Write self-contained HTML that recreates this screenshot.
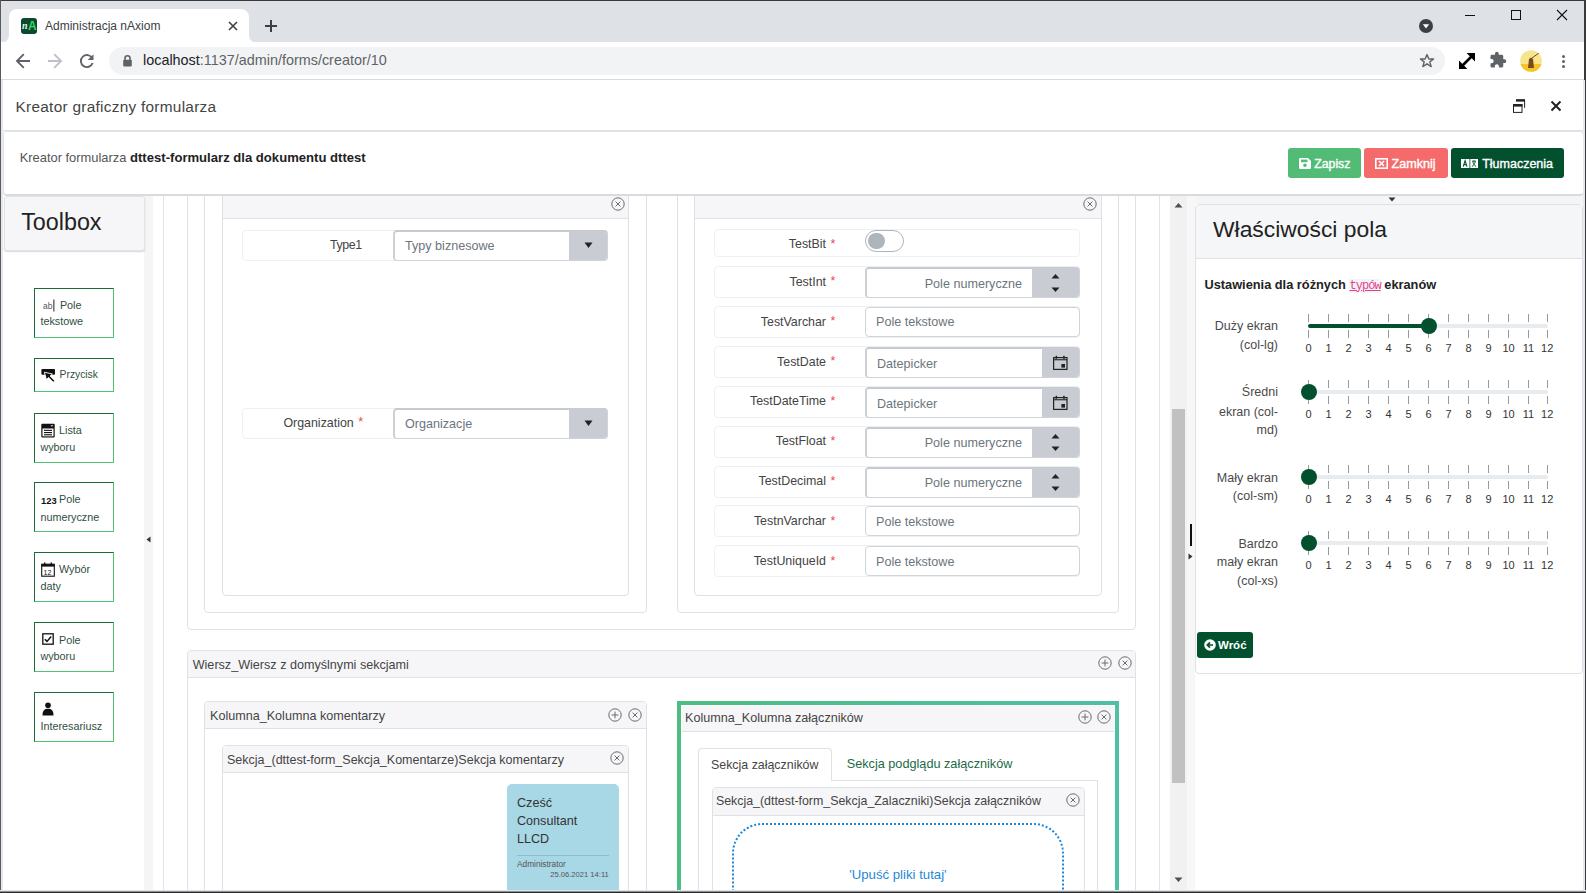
<!DOCTYPE html>
<html><head><meta charset="utf-8"><style>
html,body{margin:0;padding:0;width:1586px;height:893px;overflow:hidden;background:#fff;position:relative;font-family:"Liberation Sans",sans-serif}
.a{position:absolute}
.t{white-space:nowrap}
</style></head><body>
<div class="a" style="left:0.00px;top:0.00px;width:1586.00px;height:42.00px;background:#dee1e6"></div><div class="a" style="left:9.00px;top:9.00px;width:240.00px;height:34.00px;background:#fff;border-radius:8px 8px 0 0"></div><div class="a" style="left:1.00px;top:33.00px;width:8.00px;height:10.00px;background:#fff"></div><div class="a" style="left:1.00px;top:25.00px;width:8.00px;height:18.00px;background:#dee1e6;border-bottom-right-radius:8px"></div><div class="a" style="left:249.00px;top:33.00px;width:8.00px;height:10.00px;background:#fff"></div><div class="a" style="left:249.00px;top:25.00px;width:8.00px;height:18.00px;background:#dee1e6;border-bottom-left-radius:8px"></div><div class="a" style="left:21px;top:18px;width:16px;height:16px;background:#0b4a2c;border-radius:3px;overflow:hidden"><div class="a t" style="left:1px;top:1px;font:italic bold 10px/14px 'Liberation Serif';color:#e8f0ea">n</div><div class="a t" style="left:7px;top:1px;font:bold 12px/14px 'Liberation Sans';color:#3ad26a">A</div></div><div class="a t" style="top:19.84px;font-size:12.0px;line-height:12.0px;color:#3c4043;font-weight:normal;font-family:'Liberation Sans';left:45.00px;">Administracja nAxiom</div><svg class="a" style="left:226.00px;top:19.00px" width="14" height="14" viewBox="0 0 14 14"><path d="M3 3L11 11M11 3L3 11" stroke="#3c4043" stroke-width="1.6"/></svg><svg class="a" style="left:263.00px;top:18.00px" width="16" height="16" viewBox="0 0 16 16"><path d="M8 2V14M2 8H14" stroke="#3c4043" stroke-width="2"/></svg><svg class="a" style="left:1419.00px;top:19.00px" width="14" height="14" viewBox="0 0 14 14"><circle cx="7" cy="7" r="7" fill="#3c4043"/><path d="M3.8 5.2H10.2L7 9.4Z" fill="#fff"/></svg><div class="a" style="left:1465.00px;top:15.00px;width:10.00px;height:1.00px;background:#111"></div><div class="a" style="left:1511.00px;top:10.00px;width:10.00px;height:10.00px;border:1px solid #111;box-sizing:border-box"></div><svg class="a" style="left:1556.00px;top:9.00px" width="12" height="12" viewBox="0 0 12 12"><path d="M1 1L11 11M11 1L1 11" stroke="#111" stroke-width="1.1"/></svg><div class="a" style="left:0.00px;top:42.00px;width:1586.00px;height:37.00px;background:#fff"></div><div class="a" style="left:0.00px;top:79.00px;width:1586.00px;height:1.00px;background:#d9dbde"></div><svg class="a" style="left:14.00px;top:53.00px" width="18" height="16" viewBox="0 0 18 16"><path d="M16 8H3M9.8 1.2L3 8L9.8 14.8" stroke="#5f6368" stroke-width="1.9" fill="none"/></svg><svg class="a" style="left:46.00px;top:53.00px" width="18" height="16" viewBox="0 0 18 16"><path d="M2 8H15M8.2 1.2L15 8L8.2 14.8" stroke="#bdc1c6" stroke-width="1.9" fill="none"/></svg><svg class="a" style="left:78.00px;top:52.00px" width="18" height="18" viewBox="0 0 18 18"><path d="M14.2 6.2A6 6 0 1 0 14.6 11" stroke="#5f6368" stroke-width="1.9" fill="none"/><path d="M15.5 2.2V8H9.7Z" fill="#5f6368"/></svg><div class="a" style="left:109.00px;top:47.00px;width:1336.00px;height:28.00px;background:#f1f3f4;border-radius:14px"></div><svg class="a" style="left:122.00px;top:54.00px" width="11" height="13" viewBox="0 0 11 13"><path d="M3 6V4.2A2.5 2.5 0 0 1 8 4.2V6" stroke="#5f6368" stroke-width="1.6" fill="none"/><rect x="1.2" y="5.8" width="8.6" height="6.6" rx="1" fill="#5f6368"/></svg><div class="a t" style="top:53.41px;font-size:14.4px;line-height:14.4px;color:#202124;font-weight:normal;font-family:'Liberation Sans';left:143.00px;"><span style="color:#202124">localhost</span><span style="color:#5f6368">:1137/admin/forms/creator/10</span></div><svg class="a" style="left:1419.00px;top:53.00px" width="16" height="16" viewBox="0 0 16 16"><path d="M8 1.6L9.9 6H14.6L10.8 8.9L12.2 13.6L8 10.8L3.8 13.6L5.2 8.9L1.4 6H6.1Z" stroke="#5f6368" stroke-width="1.4" fill="none" stroke-linejoin="round"/></svg><svg class="a" style="left:1458.00px;top:52.00px" width="18" height="18" viewBox="0 0 18 18"><path d="M4.5 13.5L13.5 4.5" stroke="#000" stroke-width="2.6"/><path d="M8.6 1H17V9.4Z" fill="#000"/><path d="M1 8.6V17H9.4Z" fill="#000"/></svg><svg class="a" style="left:1489px;top:51px" width="18" height="18" viewBox="0 0 24 24"><path d="M20.5 11H19V7c0-1.1-.9-2-2-2h-4V3.5C13 2.12 11.88 1 10.5 1S8 2.12 8 3.5V5H4c-1.1 0-1.99.9-1.99 2v3.8H3.5c1.49 0 2.7 1.21 2.7 2.7s-1.21 2.7-2.7 2.7H2V20c0 1.1.9 2 2 2h3.8v-1.5c0-1.490 1.21-2.7 2.7-2.7 1.49 0 2.7 1.21 2.7 2.7V22H17c1.1 0 2-.9 2-2v-4h1.5c1.38 0 2.5-1.12 2.5-2.5S21.88 11 20.5 11z" fill="#5f6368"/></svg><svg class="a" style="left:1520.00px;top:50.00px" width="22" height="22" viewBox="0 0 22 22"><defs><clipPath id="cav"><circle cx="11" cy="11" r="10.8"/></clipPath></defs><g clip-path="url(#cav)"><rect width="22" height="22" fill="#f6e58d"/><rect y="14" width="22" height="8" fill="#f4c52b"/><path d="M8 18L9 9L11 7.5L13 9L14 18Z" fill="#7a4a1e"/><path d="M12 8L19 3" stroke="#7a4a1e" stroke-width="1"/></g></svg><div class="a" style="left:1561.90px;top:54.90px;width:3.00px;height:3.00px;border-radius:50%;background:#5f6368"></div><div class="a" style="left:1561.90px;top:60.10px;width:3.00px;height:3.00px;border-radius:50%;background:#5f6368"></div><div class="a" style="left:1561.90px;top:64.90px;width:3.00px;height:3.00px;border-radius:50%;background:#5f6368"></div><div class="a" style="left:0.00px;top:80.00px;width:1586.00px;height:50.00px;background:#fff"></div><div class="a t" style="top:98.86px;font-size:15.4px;line-height:15.4px;color:#444;font-weight:normal;font-family:'Liberation Sans';letter-spacing:0.27px;left:15.50px;">Kreator graficzny formularza</div><svg class="a" style="left:1511.00px;top:97.00px" width="16" height="18" viewBox="0 0 16 18"><path d="M5.6 3.2H13.6V10.8" stroke="#222" stroke-width="1" fill="none"/><rect x="5" y="2.2" width="9" height="2.4" fill="#222"/><rect x="2.5" y="7.6" width="8.5" height="7.8" stroke="#222" stroke-width="1" fill="none"/><rect x="2" y="7.2" width="9.5" height="2.4" fill="#222"/></svg><svg class="a" style="left:1549.00px;top:99.00px" width="14" height="14" viewBox="0 0 14 14"><path d="M2.5 2.5L11.5 11.5M11.5 2.5L2.5 11.5" stroke="#222" stroke-width="2"/></svg><div class="a" style="left:0.00px;top:130.00px;width:1586.00px;height:1.00px;background:#dee2e6"></div><div class="a" style="left:3.00px;top:131.00px;width:1581.00px;height:65.00px;background:#fff;border:1px solid #dee2e6;border-bottom:2px solid #d9dcdf;border-radius:4px;box-sizing:border-box"></div><div class="a t" style="top:151.03px;font-size:13.2px;line-height:13.2px;color:#555;font-weight:normal;font-family:'Liberation Sans';left:19.70px;"><span style="font-size:12.9px">Kreator formularza </span><b style="color:#222;font-size:13.1px">dttest-formularz dla dokumentu dttest</b></div><div class="a" style="left:1288.00px;top:148.00px;width:73.00px;height:30.00px;background:#52bc76;border-radius:3px"></div><div class="a" style="left:1364.00px;top:148.00px;width:84.00px;height:30.00px;background:#f56b6b;border-radius:3px"></div><div class="a" style="left:1451.00px;top:148.00px;width:113.00px;height:30.00px;background:#03502f;border-radius:3px"></div><svg class="a" style="left:1299.00px;top:158.00px" width="12" height="11" viewBox="0 0 12 11"><path d="M0 1.2A1.2 1.2 0 0 1 1.2 0H9L12 3V9.8A1.2 1.2 0 0 1 10.8 11H1.2A1.2 1.2 0 0 1 0 9.8Z" fill="#fff"/><rect x="2" y="1.6" width="6.5" height="2.6" fill="#52bc76"/><circle cx="6" cy="7.3" r="1.7" fill="#52bc76"/></svg><svg class="a" style="left:1375.00px;top:158.00px" width="13" height="11" viewBox="0 0 13 11"><rect x="0.8" y="0.8" width="11.4" height="9.4" stroke="#fff" stroke-width="1.6" fill="none"/><path d="M4 3L9 8M9 3L4 8" stroke="#fff" stroke-width="1.7"/></svg><svg class="a" style="left:1461.00px;top:159.00px" width="17" height="9" viewBox="0 0 17 9"><rect x="0" y="0" width="17" height="9" fill="#fff"/><path d="M2.2 7.6L4.1 1.6L6 7.6M3 5.6H5.2" stroke="#03502f" stroke-width="1.1" fill="none"/><rect x="8.5" y="0" width="0.8" height="9" fill="#03502f"/><path d="M11 2.2H15M13 1.2V2.2M11.8 2.4C12.3 5 13.5 6.6 15.2 7.6M14.3 2.4C13.8 5 12.6 6.6 10.9 7.6" stroke="#03502f" stroke-width="0.9" fill="none"/></svg><div class="a t" style="top:157.99px;font-size:12.3px;line-height:12.3px;color:#fff;font-weight:normal;font-family:'Liberation Sans';left:1314.20px;-webkit-text-stroke:0.35px #fff">Zapisz</div><div class="a t" style="top:157.73px;font-size:12.6px;line-height:12.6px;color:#fff;font-weight:normal;font-family:'Liberation Sans';left:1391.50px;-webkit-text-stroke:0.35px #fff">Zamknij</div><div class="a t" style="top:157.82px;font-size:12.5px;line-height:12.5px;color:#fff;font-weight:normal;font-family:'Liberation Sans';left:1482.20px;-webkit-text-stroke:0.35px #fff">Tłumaczenia</div><div class="a" style="left:3.00px;top:196.00px;width:1581.00px;height:694.00px;background:#fff"></div><div class="a" style="left:144.00px;top:196.00px;width:9.00px;height:694.00px;background:#f5f5f5"></div><div class="a" style="left:1170.00px;top:196.00px;width:17.00px;height:694.00px;background:#f1f1f1"></div><div class="a" style="left:1172.00px;top:409.00px;width:13.00px;height:374.00px;background:#c1c1c1"></div><svg class="a" style="left:1174.00px;top:202.00px" width="9" height="6" viewBox="0 0 9 6"><path d="M0.5 5.5H8.5L4.5 1Z" fill="#505050"/></svg><svg class="a" style="left:1174.00px;top:877.00px" width="9" height="6" viewBox="0 0 9 6"><path d="M0.5 0.5H8.5L4.5 5Z" fill="#505050"/></svg><div class="a" style="left:1187.00px;top:196.00px;width:8.00px;height:694.00px;background:#f7f7f7"></div><div class="a" style="left:1195.00px;top:196.00px;width:389.00px;height:8.00px;background:#f5f5f5"></div><svg class="a" style="left:1388.00px;top:197.00px" width="8" height="5" viewBox="0 0 8 5"><path d="M0.5 0.5H7.5L4 4.5Z" fill="#333"/></svg><svg class="a" style="left:146.00px;top:536.00px" width="5" height="7" viewBox="0 0 5 7"><path d="M4.5 0.5V6.5L0.5 3.5Z" fill="#333"/></svg><svg class="a" style="left:1188.00px;top:553.00px" width="5" height="7" viewBox="0 0 5 7"><path d="M0.5 0.5V6.5L4.5 3.5Z" fill="#333"/></svg><div class="a" style="left:1190.00px;top:524.00px;width:2.00px;height:22.00px;background:#111"></div><div class="a" style="left:4.00px;top:196.00px;width:141.00px;height:55.00px;background:#f6f6f8;border:1px solid #e2e4e7;border-radius:3px;box-shadow:0 1px 1.5px rgba(0,0,0,.16);box-sizing:border-box"></div><div class="a t" style="top:210.78px;font-size:23.3px;line-height:23.3px;color:#222;font-weight:normal;font-family:'Liberation Sans';left:21.20px;">Toolbox</div><div class="a" style="left:34.00px;top:288.00px;width:80.00px;height:50.00px;border-style:solid;border-width:1px;border-color:#1d6b3c #4ec472 #4ec472 #1d6b3c;box-sizing:border-box"></div><svg class="a" style="left:43.00px;top:298.00px" width="13" height="14" viewBox="0 0 13 14"><text x="0" y="10.5" font-family="Liberation Sans" font-size="8.5" fill="#555">ab</text><rect x="10.2" y="1.5" width="1.3" height="12" fill="#555"/></svg><div class="a t" style="top:299.86px;font-size:10.8px;line-height:10.8px;color:#2f4f3e;font-weight:normal;font-family:'Liberation Sans';left:59.90px;">Pole</div><div class="a t" style="top:316.46px;font-size:10.8px;line-height:10.8px;color:#2f4f3e;font-weight:normal;font-family:'Liberation Sans';left:40.40px;">tekstowe</div><div class="a" style="left:34.00px;top:358.00px;width:80.00px;height:34.00px;border-style:solid;border-width:1px;border-color:#1d6b3c #4ec472 #4ec472 #1d6b3c;box-sizing:border-box"></div><svg class="a" style="left:41.00px;top:368.00px" width="15" height="16" viewBox="0 0 15 16"><rect x="0.4" y="1" width="13.6" height="5.8" rx="1" fill="#111"/><path d="M3.4 4.2L5.4 11.6L7.6 9.4L12.2 14.2L13.8 12.8L9.1 8.0L11.4 6.0Z" fill="#111" stroke="#fff" stroke-width="0.9" stroke-linejoin="round"/></svg><div class="a t" style="top:370.48px;font-size:10.3px;line-height:10.3px;color:#2f4f3e;font-weight:normal;font-family:'Liberation Sans';left:59.60px;">Przycisk</div><div class="a" style="left:34.00px;top:413.00px;width:80.00px;height:50.00px;border-style:solid;border-width:1px;border-color:#1d6b3c #4ec472 #4ec472 #1d6b3c;box-sizing:border-box"></div><svg class="a" style="left:41.00px;top:423.00px" width="14" height="15" viewBox="0 0 14 15"><rect x="0.3" y="0.8" width="13.4" height="13.6" rx="1" fill="#111"/><rect x="1.5" y="5.5" width="11" height="7.8" fill="#fff"/><rect x="3" y="6.8" width="8" height="1.1" fill="#111"/><rect x="3" y="9" width="8" height="1.1" fill="#111"/><rect x="3" y="11.2" width="8" height="1.1" fill="#111"/><path d="M9.6 2.2H12.2L10.9 3.8Z" fill="#fff"/></svg><div class="a t" style="top:425.36px;font-size:10.8px;line-height:10.8px;color:#2f4f3e;font-weight:normal;font-family:'Liberation Sans';left:59.00px;">Lista</div><div class="a t" style="top:442.36px;font-size:10.8px;line-height:10.8px;color:#2f4f3e;font-weight:normal;font-family:'Liberation Sans';left:40.40px;">wyboru</div><div class="a" style="left:34.00px;top:482.00px;width:80.00px;height:50.00px;border-style:solid;border-width:1px;border-color:#1d6b3c #4ec472 #4ec472 #1d6b3c;box-sizing:border-box"></div><div class="a t" style="top:496.04px;font-size:9.4px;line-height:9.4px;color:#111;font-weight:bold;font-family:'Liberation Sans';left:41.00px;">123</div><div class="a t" style="top:494.36px;font-size:10.8px;line-height:10.8px;color:#2f4f3e;font-weight:normal;font-family:'Liberation Sans';left:59.00px;">Pole</div><div class="a t" style="top:511.86px;font-size:10.8px;line-height:10.8px;color:#2f4f3e;font-weight:normal;font-family:'Liberation Sans';left:40.40px;">numeryczne</div><div class="a" style="left:34.00px;top:552.00px;width:80.00px;height:50.00px;border-style:solid;border-width:1px;border-color:#1d6b3c #4ec472 #4ec472 #1d6b3c;box-sizing:border-box"></div><svg class="a" style="left:40.50px;top:562.00px" width="14" height="15" viewBox="0 0 14 15"><rect x="0.7" y="2.2" width="12.6" height="12" stroke="#111" stroke-width="1.1" fill="none"/><rect x="0.7" y="2.2" width="12.6" height="2.4" fill="#111"/><rect x="3" y="0.5" width="1.4" height="3" fill="#111"/><rect x="9.6" y="0.5" width="1.4" height="3" fill="#111"/><text x="2.6" y="12.6" font-family="Liberation Sans" font-size="7" fill="#111">12</text></svg><div class="a t" style="top:564.36px;font-size:10.8px;line-height:10.8px;color:#2f4f3e;font-weight:normal;font-family:'Liberation Sans';left:59.00px;">Wybór</div><div class="a t" style="top:581.36px;font-size:10.8px;line-height:10.8px;color:#2f4f3e;font-weight:normal;font-family:'Liberation Sans';left:40.40px;">daty</div><div class="a" style="left:34.00px;top:622.00px;width:80.00px;height:50.00px;border-style:solid;border-width:1px;border-color:#1d6b3c #4ec472 #4ec472 #1d6b3c;box-sizing:border-box"></div><svg class="a" style="left:42.00px;top:633.00px" width="12" height="12" viewBox="0 0 12 12"><rect x="0.8" y="0.8" width="10.4" height="10.4" stroke="#111" stroke-width="1.3" fill="none"/><path d="M2.8 6.2L5 8.4L9.2 3.4" stroke="#111" stroke-width="1.5" fill="none"/></svg><div class="a t" style="top:634.86px;font-size:10.8px;line-height:10.8px;color:#2f4f3e;font-weight:normal;font-family:'Liberation Sans';left:59.00px;">Pole</div><div class="a t" style="top:651.36px;font-size:10.8px;line-height:10.8px;color:#2f4f3e;font-weight:normal;font-family:'Liberation Sans';left:40.40px;">wyboru</div><div class="a" style="left:34.00px;top:692.00px;width:80.00px;height:50.00px;border-style:solid;border-width:1px;border-color:#1d6b3c #4ec472 #4ec472 #1d6b3c;box-sizing:border-box"></div><svg class="a" style="left:42.00px;top:702.00px" width="12" height="14" viewBox="0 0 12 14"><circle cx="6" cy="3.2" r="2.8" fill="#111"/><path d="M0.5 13.5C0.5 8.5 2.5 6.8 6 6.8C9.5 6.8 11.5 8.5 11.5 13.5Z" fill="#111"/></svg><div class="a t" style="top:720.86px;font-size:10.8px;line-height:10.8px;color:#2f4f3e;font-weight:normal;font-family:'Liberation Sans';left:40.40px;">Interesariusz</div><div class="a" style="left:153px;top:196px;width:1017px;height:694px;overflow:hidden"><div class="a" style="left:10.00px;top:-46.00px;width:1.00px;height:850.00px;background:#dfe3ea"></div><div class="a" style="left:1006.00px;top:-46.00px;width:1.00px;height:850.00px;background:#dfe3ea"></div><div class="a" style="left:34.00px;top:-36.00px;width:949.00px;height:470.00px;border:1px solid #dee2e6;border-radius:4px;box-sizing:border-box"></div><div class="a" style="left:51.00px;top:-26.00px;width:443.00px;height:443.00px;border:1px solid #dee2e6;border-radius:4px;box-sizing:border-box"></div><div class="a" style="left:524.00px;top:-26.00px;width:442.00px;height:443.00px;border:1px solid #dee2e6;border-radius:4px;box-sizing:border-box"></div><div class="a" style="left:69.00px;top:-16.00px;width:407.00px;height:416.00px;border:1px solid #dee2e6;border-radius:4px;box-sizing:border-box"></div><div class="a" style="left:70.00px;top:-15.00px;width:405.00px;height:38.00px;background:#f6f6f8;border-bottom:1px solid #dee2e6;border-radius:3px 3px 0 0;box-sizing:border-box"></div><div class="a" style="left:541.00px;top:-16.00px;width:408.00px;height:416.00px;border:1px solid #dee2e6;border-radius:4px;box-sizing:border-box"></div><div class="a" style="left:542.00px;top:-15.00px;width:406.00px;height:38.00px;background:#f6f6f8;border-bottom:1px solid #dee2e6;border-radius:3px 3px 0 0;box-sizing:border-box"></div><svg class="a" style="left:457.50px;top:1.00px" width="14" height="14" viewBox="0 0 14 14"><circle cx="7" cy="7" r="6.2" stroke="#6b6b6b" stroke-width="1" fill="none"/><path d="M4.6 4.6L9.4 9.4M9.4 4.6L4.6 9.4" stroke="#6b6b6b" stroke-width="1"/></svg><svg class="a" style="left:929.50px;top:1.00px" width="14" height="14" viewBox="0 0 14 14"><circle cx="7" cy="7" r="6.2" stroke="#6b6b6b" stroke-width="1" fill="none"/><path d="M4.6 4.6L9.4 9.4M9.4 4.6L4.6 9.4" stroke="#6b6b6b" stroke-width="1"/></svg><div class="a" style="left:89.00px;top:34.00px;width:366.00px;height:31.00px;border:1px solid #eef0f2;border-radius:4px;box-sizing:border-box"></div><div class="a t" style="top:42.80px;font-size:12.4px;line-height:12.4px;color:#444;font-weight:normal;font-family:'Liberation Sans';letter-spacing:-0.45px;left:-391.40px;width:600px;text-align:right;">Type1</div><div class="a" style="left:240.00px;top:34.00px;width:215.00px;height:31.00px;background:#fff;border:1px solid #ced4da;border-top:2px solid #c6cbd1;border-left:2px solid #cdd1d6;border-radius:4px;box-sizing:border-box"></div><div class="a" style="left:416.00px;top:35.00px;width:38.00px;height:29.00px;background:#c9cdd3;border-radius:0 3px 3px 0"></div><svg class="a" style="left:431.00px;top:46.00px" width="9" height="7" viewBox="0 0 9 7"><path d="M0.5 0.5H8.5L4.5 6Z" fill="#222"/></svg><div class="a t" style="top:44.03px;font-size:12.6px;line-height:12.6px;color:#6c757d;font-weight:normal;font-family:'Liberation Sans';left:252.00px;">Typy biznesowe</div><div class="a" style="left:89.00px;top:211.50px;width:366.00px;height:31.50px;border:1px solid #eef0f2;border-radius:4px;box-sizing:border-box"></div><div class="a t" style="top:220.80px;font-size:12.4px;line-height:12.4px;color:#444;font-weight:normal;font-family:'Liberation Sans';left:-399.30px;width:600px;text-align:right;">Organization</div><div class="a t" style="top:220.30px;font-size:12.4px;line-height:12.4px;color:#e84c4c;font-weight:normal;font-family:'Liberation Sans';left:205.20px;">*</div><div class="a" style="left:240.00px;top:212.30px;width:215.00px;height:31.00px;background:#fff;border:1px solid #ced4da;border-top:2px solid #c6cbd1;border-left:2px solid #cdd1d6;border-radius:4px;box-sizing:border-box"></div><div class="a" style="left:416.00px;top:213.30px;width:38.00px;height:29.00px;background:#c9cdd3;border-radius:0 3px 3px 0"></div><svg class="a" style="left:431.00px;top:224.30px" width="9" height="7" viewBox="0 0 9 7"><path d="M0.5 0.5H8.5L4.5 6Z" fill="#222"/></svg><div class="a t" style="top:222.33px;font-size:12.6px;line-height:12.6px;color:#6c757d;font-weight:normal;font-family:'Liberation Sans';left:252.00px;">Organizacje</div><div class="a" style="left:561.00px;top:33.00px;width:366.00px;height:28.00px;border:1px solid #eef0f2;border-radius:4px;box-sizing:border-box"></div><div class="a t" style="top:42.40px;font-size:12.4px;line-height:12.4px;color:#444;font-weight:normal;font-family:'Liberation Sans';left:73.00px;width:600px;text-align:right;">TestBit</div><div class="a t" style="top:41.90px;font-size:12.4px;line-height:12.4px;color:#e84c4c;font-weight:normal;font-family:'Liberation Sans';left:677.50px;">*</div><div class="a" style="left:712.00px;top:34.00px;width:39.00px;height:22.00px;border:1px solid #adb5bd;border-radius:11px;box-sizing:border-box;background:#fff"></div><div class="a" style="left:715.30px;top:36.70px;width:16.70px;height:16.60px;border-radius:50%;background:#adb5bd"></div><div class="a" style="left:561.00px;top:70.00px;width:366.00px;height:32.00px;border:1px solid #eef0f2;border-radius:4px;box-sizing:border-box"></div><div class="a t" style="top:79.70px;font-size:12.4px;line-height:12.4px;color:#444;font-weight:normal;font-family:'Liberation Sans';left:73.00px;width:600px;text-align:right;">TestInt</div><div class="a t" style="top:79.20px;font-size:12.4px;line-height:12.4px;color:#e84c4c;font-weight:normal;font-family:'Liberation Sans';left:677.50px;">*</div><div class="a" style="left:712.00px;top:71.00px;width:215.00px;height:31.00px;background:#fff;border:1px solid #ced4da;border-top:2px solid #c6cbd1;border-left:2px solid #cdd1d6;border-radius:4px;box-sizing:border-box"></div><div class="a" style="left:879.00px;top:72.00px;width:47.00px;height:29.00px;background:#c9cdd3;border-radius:0 3px 3px 0"></div><svg class="a" style="left:898.00px;top:78.00px" width="9" height="5" viewBox="0 0 9 5"><path d="M0.5 4.5H8.5L4.5 0Z" fill="#222"/></svg><svg class="a" style="left:898.00px;top:90.50px" width="9" height="5" viewBox="0 0 9 5"><path d="M0.5 0.5H8.5L4.5 5Z" fill="#222"/></svg><div class="a t" style="top:81.73px;font-size:12.6px;line-height:12.6px;color:#6c757d;font-weight:normal;font-family:'Liberation Sans';left:269.00px;width:600px;text-align:right;">Pole numeryczne</div><div class="a" style="left:561.00px;top:109.90px;width:366.00px;height:32.00px;border:1px solid #eef0f2;border-radius:4px;box-sizing:border-box"></div><div class="a t" style="top:119.60px;font-size:12.4px;line-height:12.4px;color:#444;font-weight:normal;font-family:'Liberation Sans';left:73.00px;width:600px;text-align:right;">TestVarchar</div><div class="a t" style="top:119.10px;font-size:12.4px;line-height:12.4px;color:#e84c4c;font-weight:normal;font-family:'Liberation Sans';left:677.50px;">*</div><div class="a" style="left:712.00px;top:110.90px;width:215.00px;height:30.00px;background:#fff;border:1px solid #ced4da;border-radius:4px;box-sizing:border-box"></div><div class="a t" style="top:120.23px;font-size:12.6px;line-height:12.6px;color:#6c757d;font-weight:normal;font-family:'Liberation Sans';left:723.00px;">Pole tekstowe</div><div class="a" style="left:561.00px;top:149.80px;width:366.00px;height:32.00px;border:1px solid #eef0f2;border-radius:4px;box-sizing:border-box"></div><div class="a t" style="top:159.50px;font-size:12.4px;line-height:12.4px;color:#444;font-weight:normal;font-family:'Liberation Sans';left:73.00px;width:600px;text-align:right;">TestDate</div><div class="a t" style="top:159.00px;font-size:12.4px;line-height:12.4px;color:#e84c4c;font-weight:normal;font-family:'Liberation Sans';left:677.50px;">*</div><div class="a" style="left:712.00px;top:150.80px;width:215.00px;height:31.00px;background:#fff;border:1px solid #ced4da;border-top:2px solid #c6cbd1;border-left:2px solid #cdd1d6;border-radius:4px;box-sizing:border-box"></div><div class="a" style="left:889.00px;top:151.80px;width:37.00px;height:29.00px;background:#c9cdd3;border-radius:0 3px 3px 0"></div><svg class="a" style="left:900.00px;top:158.80px" width="15" height="15" viewBox="0 0 15 15"><rect x="0.6" y="2.6" width="13.4" height="11.8" stroke="#222" stroke-width="1.2" fill="none"/><rect x="0.6" y="4.2" width="13.4" height="1.1" fill="#222"/><rect x="2.6" y="0.8" width="1.5" height="3" fill="#222"/><rect x="10.2" y="0.8" width="1.5" height="3" fill="#222"/><rect x="8.4" y="9" width="3.6" height="3.6" fill="#222"/></svg><div class="a t" style="top:161.73px;font-size:12.6px;line-height:12.6px;color:#6c757d;font-weight:normal;font-family:'Liberation Sans';left:724.00px;">Datepicker</div><div class="a" style="left:561.00px;top:189.70px;width:366.00px;height:32.00px;border:1px solid #eef0f2;border-radius:4px;box-sizing:border-box"></div><div class="a t" style="top:199.40px;font-size:12.4px;line-height:12.4px;color:#444;font-weight:normal;font-family:'Liberation Sans';left:73.00px;width:600px;text-align:right;">TestDateTime</div><div class="a t" style="top:198.90px;font-size:12.4px;line-height:12.4px;color:#e84c4c;font-weight:normal;font-family:'Liberation Sans';left:677.50px;">*</div><div class="a" style="left:712.00px;top:190.70px;width:215.00px;height:31.00px;background:#fff;border:1px solid #ced4da;border-top:2px solid #c6cbd1;border-left:2px solid #cdd1d6;border-radius:4px;box-sizing:border-box"></div><div class="a" style="left:889.00px;top:191.70px;width:37.00px;height:29.00px;background:#c9cdd3;border-radius:0 3px 3px 0"></div><svg class="a" style="left:900.00px;top:198.70px" width="15" height="15" viewBox="0 0 15 15"><rect x="0.6" y="2.6" width="13.4" height="11.8" stroke="#222" stroke-width="1.2" fill="none"/><rect x="0.6" y="4.2" width="13.4" height="1.1" fill="#222"/><rect x="2.6" y="0.8" width="1.5" height="3" fill="#222"/><rect x="10.2" y="0.8" width="1.5" height="3" fill="#222"/><rect x="8.4" y="9" width="3.6" height="3.6" fill="#222"/></svg><div class="a t" style="top:201.63px;font-size:12.6px;line-height:12.6px;color:#6c757d;font-weight:normal;font-family:'Liberation Sans';left:724.00px;">Datepicker</div><div class="a" style="left:561.00px;top:229.60px;width:366.00px;height:32.00px;border:1px solid #eef0f2;border-radius:4px;box-sizing:border-box"></div><div class="a t" style="top:239.30px;font-size:12.4px;line-height:12.4px;color:#444;font-weight:normal;font-family:'Liberation Sans';left:73.00px;width:600px;text-align:right;">TestFloat</div><div class="a t" style="top:238.80px;font-size:12.4px;line-height:12.4px;color:#e84c4c;font-weight:normal;font-family:'Liberation Sans';left:677.50px;">*</div><div class="a" style="left:712.00px;top:230.60px;width:215.00px;height:31.00px;background:#fff;border:1px solid #ced4da;border-top:2px solid #c6cbd1;border-left:2px solid #cdd1d6;border-radius:4px;box-sizing:border-box"></div><div class="a" style="left:879.00px;top:231.60px;width:47.00px;height:29.00px;background:#c9cdd3;border-radius:0 3px 3px 0"></div><svg class="a" style="left:898.00px;top:237.60px" width="9" height="5" viewBox="0 0 9 5"><path d="M0.5 4.5H8.5L4.5 0Z" fill="#222"/></svg><svg class="a" style="left:898.00px;top:250.10px" width="9" height="5" viewBox="0 0 9 5"><path d="M0.5 0.5H8.5L4.5 5Z" fill="#222"/></svg><div class="a t" style="top:241.33px;font-size:12.6px;line-height:12.6px;color:#6c757d;font-weight:normal;font-family:'Liberation Sans';left:269.00px;width:600px;text-align:right;">Pole numeryczne</div><div class="a" style="left:561.00px;top:269.50px;width:366.00px;height:32.00px;border:1px solid #eef0f2;border-radius:4px;box-sizing:border-box"></div><div class="a t" style="top:279.20px;font-size:12.4px;line-height:12.4px;color:#444;font-weight:normal;font-family:'Liberation Sans';left:73.00px;width:600px;text-align:right;">TestDecimal</div><div class="a t" style="top:278.70px;font-size:12.4px;line-height:12.4px;color:#e84c4c;font-weight:normal;font-family:'Liberation Sans';left:677.50px;">*</div><div class="a" style="left:712.00px;top:270.50px;width:215.00px;height:31.00px;background:#fff;border:1px solid #ced4da;border-top:2px solid #c6cbd1;border-left:2px solid #cdd1d6;border-radius:4px;box-sizing:border-box"></div><div class="a" style="left:879.00px;top:271.50px;width:47.00px;height:29.00px;background:#c9cdd3;border-radius:0 3px 3px 0"></div><svg class="a" style="left:898.00px;top:277.50px" width="9" height="5" viewBox="0 0 9 5"><path d="M0.5 4.5H8.5L4.5 0Z" fill="#222"/></svg><svg class="a" style="left:898.00px;top:290.00px" width="9" height="5" viewBox="0 0 9 5"><path d="M0.5 0.5H8.5L4.5 5Z" fill="#222"/></svg><div class="a t" style="top:281.23px;font-size:12.6px;line-height:12.6px;color:#6c757d;font-weight:normal;font-family:'Liberation Sans';left:269.00px;width:600px;text-align:right;">Pole numeryczne</div><div class="a" style="left:561.00px;top:309.40px;width:366.00px;height:32.00px;border:1px solid #eef0f2;border-radius:4px;box-sizing:border-box"></div><div class="a t" style="top:319.10px;font-size:12.4px;line-height:12.4px;color:#444;font-weight:normal;font-family:'Liberation Sans';left:73.00px;width:600px;text-align:right;">TestnVarchar</div><div class="a t" style="top:318.60px;font-size:12.4px;line-height:12.4px;color:#e84c4c;font-weight:normal;font-family:'Liberation Sans';left:677.50px;">*</div><div class="a" style="left:712.00px;top:310.40px;width:215.00px;height:30.00px;background:#fff;border:1px solid #ced4da;border-radius:4px;box-sizing:border-box"></div><div class="a t" style="top:319.73px;font-size:12.6px;line-height:12.6px;color:#6c757d;font-weight:normal;font-family:'Liberation Sans';left:723.00px;">Pole tekstowe</div><div class="a" style="left:561.00px;top:349.30px;width:366.00px;height:32.00px;border:1px solid #eef0f2;border-radius:4px;box-sizing:border-box"></div><div class="a t" style="top:359.00px;font-size:12.4px;line-height:12.4px;color:#444;font-weight:normal;font-family:'Liberation Sans';left:73.00px;width:600px;text-align:right;">TestUniqueId</div><div class="a t" style="top:358.50px;font-size:12.4px;line-height:12.4px;color:#e84c4c;font-weight:normal;font-family:'Liberation Sans';left:677.50px;">*</div><div class="a" style="left:712.00px;top:350.30px;width:215.00px;height:30.00px;background:#fff;border:1px solid #ced4da;border-radius:4px;box-sizing:border-box"></div><div class="a t" style="top:359.63px;font-size:12.6px;line-height:12.6px;color:#6c757d;font-weight:normal;font-family:'Liberation Sans';left:723.00px;">Pole tekstowe</div><div class="a" style="left:34.00px;top:454.00px;width:949.00px;height:350.00px;border:1px solid #dee2e6;border-radius:4px;box-sizing:border-box"></div><div class="a" style="left:35.00px;top:455.00px;width:947.00px;height:27.00px;background:#f6f6f8;border-bottom:1px solid #dee2e6;border-radius:3px 3px 0 0;box-sizing:border-box"></div><div class="a t" style="top:463.13px;font-size:12.6px;line-height:12.6px;color:#444;font-weight:normal;font-family:'Liberation Sans';left:39.70px;">Wiersz_Wiersz z domyślnymi sekcjami</div><svg class="a" style="left:944.80px;top:460.40px" width="14" height="14" viewBox="0 0 14 14"><circle cx="7" cy="7" r="6.2" stroke="#6b6b6b" stroke-width="1" fill="none"/><path d="M7 3.6V10.4M3.6 7H10.4" stroke="#6b6b6b" stroke-width="1"/></svg><svg class="a" style="left:964.50px;top:460.40px" width="14" height="14" viewBox="0 0 14 14"><circle cx="7" cy="7" r="6.2" stroke="#6b6b6b" stroke-width="1" fill="none"/><path d="M4.6 4.6L9.4 9.4M9.4 4.6L4.6 9.4" stroke="#6b6b6b" stroke-width="1"/></svg><div class="a" style="left:51.00px;top:505.00px;width:443.00px;height:299.00px;border:1px solid #dee2e6;border-radius:4px;box-sizing:border-box"></div><div class="a" style="left:52.00px;top:506.00px;width:441.00px;height:27.00px;background:#f6f6f8;border-bottom:1px solid #dee2e6;border-radius:3px 3px 0 0;box-sizing:border-box"></div><div class="a t" style="top:514.13px;font-size:12.6px;line-height:12.6px;color:#444;font-weight:normal;font-family:'Liberation Sans';left:57.00px;">Kolumna_Kolumna komentarzy</div><svg class="a" style="left:455.30px;top:511.50px" width="14" height="14" viewBox="0 0 14 14"><circle cx="7" cy="7" r="6.2" stroke="#6b6b6b" stroke-width="1" fill="none"/><path d="M7 3.6V10.4M3.6 7H10.4" stroke="#6b6b6b" stroke-width="1"/></svg><svg class="a" style="left:474.70px;top:511.50px" width="14" height="14" viewBox="0 0 14 14"><circle cx="7" cy="7" r="6.2" stroke="#6b6b6b" stroke-width="1" fill="none"/><path d="M4.6 4.6L9.4 9.4M9.4 4.6L4.6 9.4" stroke="#6b6b6b" stroke-width="1"/></svg><div class="a" style="left:69.00px;top:549.00px;width:407.00px;height:255.00px;border:1px solid #dee2e6;border-radius:4px;box-sizing:border-box"></div><div class="a" style="left:70.00px;top:550.00px;width:405.00px;height:27.00px;background:#f6f6f8;border-bottom:1px solid #dee2e6;border-radius:3px 3px 0 0;box-sizing:border-box"></div><div class="a t" style="top:557.62px;font-size:12.5px;line-height:12.5px;color:#444;font-weight:normal;font-family:'Liberation Sans';left:74.00px;">Sekcja_(dttest-form_Sekcja_Komentarze)Sekcja komentarzy</div><svg class="a" style="left:457.40px;top:555.30px" width="14" height="14" viewBox="0 0 14 14"><circle cx="7" cy="7" r="6.2" stroke="#6b6b6b" stroke-width="1" fill="none"/><path d="M4.6 4.6L9.4 9.4M9.4 4.6L4.6 9.4" stroke="#6b6b6b" stroke-width="1"/></svg><div class="a" style="left:354.00px;top:588.00px;width:112.00px;height:216.00px;background:#a8d7e5;border-radius:5px"></div><div class="a t" style="top:600.93px;font-size:12.6px;line-height:12.6px;color:#333;font-weight:normal;font-family:'Liberation Sans';left:364.00px;">Cześć</div><div class="a t" style="top:618.63px;font-size:12.6px;line-height:12.6px;color:#333;font-weight:normal;font-family:'Liberation Sans';left:364.00px;">Consultant</div><div class="a t" style="top:636.53px;font-size:12.6px;line-height:12.6px;color:#333;font-weight:normal;font-family:'Liberation Sans';left:364.00px;">LLCD</div><div class="a" style="left:364.00px;top:658.50px;width:92.00px;height:1.00px;background:#8fbccb"></div><div class="a t" style="top:663.67px;font-size:8.3px;line-height:8.3px;color:#555;font-weight:normal;font-family:'Liberation Sans';left:364.00px;">Administrator</div><div class="a t" style="top:675.37px;font-size:7.6px;line-height:7.6px;color:#555;font-weight:normal;font-family:'Liberation Sans';left:-144.20px;width:600px;text-align:right;">25.06.2021 14:11</div><div class="a" style="left:524.00px;top:505.00px;width:442.00px;height:299.00px;border:4px solid #4ebd88;border-image:linear-gradient(to right,#4dbd82,#4fbfa6) 1;box-sizing:border-box"></div><div class="a" style="left:529.00px;top:510.00px;width:432.00px;height:25.50px;background:#f6f6f8;border-bottom:1px solid #dee2e6;box-sizing:border-box"></div><div class="a t" style="top:516.03px;font-size:12.6px;line-height:12.6px;color:#444;font-weight:normal;font-family:'Liberation Sans';left:532.10px;">Kolumna_Kolumna załączników</div><svg class="a" style="left:924.70px;top:514.20px" width="14" height="14" viewBox="0 0 14 14"><circle cx="7" cy="7" r="6.2" stroke="#6b6b6b" stroke-width="1" fill="none"/><path d="M7 3.6V10.4M3.6 7H10.4" stroke="#6b6b6b" stroke-width="1"/></svg><svg class="a" style="left:944.00px;top:514.20px" width="14" height="14" viewBox="0 0 14 14"><circle cx="7" cy="7" r="6.2" stroke="#6b6b6b" stroke-width="1" fill="none"/><path d="M4.6 4.6L9.4 9.4M9.4 4.6L4.6 9.4" stroke="#6b6b6b" stroke-width="1"/></svg><div class="a" style="left:544.70px;top:584.00px;width:400.80px;height:220.00px;border:1px solid #dee2e6;box-sizing:border-box"></div><div class="a" style="left:544.70px;top:552.00px;width:134.80px;height:33.00px;background:#fff;border:1px solid #dee2e6;border-bottom:none;border-radius:4px 4px 0 0;box-sizing:border-box"></div><div class="a t" style="top:562.50px;font-size:12.4px;line-height:12.4px;color:#444;font-weight:normal;font-family:'Liberation Sans';left:558.00px;">Sekcja załączników</div><div class="a t" style="top:562.25px;font-size:12.7px;line-height:12.7px;color:#1e6a47;font-weight:normal;font-family:'Liberation Sans';left:693.70px;">Sekcja podglądu załączników</div><div class="a" style="left:558.50px;top:591.00px;width:373.00px;height:213.00px;border:1px solid #dee2e6;border-radius:4px;box-sizing:border-box"></div><div class="a" style="left:559.50px;top:592.00px;width:371.00px;height:28.00px;background:#f6f6f8;border-bottom:1px solid #dee2e6;border-radius:3px 3px 0 0;box-sizing:border-box"></div><div class="a t" style="top:598.90px;font-size:12.4px;line-height:12.4px;color:#444;font-weight:normal;font-family:'Liberation Sans';left:562.90px;">Sekcja_(dttest-form_Sekcja_Zalaczniki)Sekcja załączników</div><svg class="a" style="left:913.00px;top:597.30px" width="14" height="14" viewBox="0 0 14 14"><circle cx="7" cy="7" r="6.2" stroke="#6b6b6b" stroke-width="1" fill="none"/><path d="M4.6 4.6L9.4 9.4M9.4 4.6L4.6 9.4" stroke="#6b6b6b" stroke-width="1"/></svg><div class="a" style="left:579.00px;top:626.50px;width:331.50px;height:177.50px;border:2px dotted #1f88d8;border-radius:30px;box-sizing:border-box"></div><div class="a t" style="top:671.83px;font-size:13.2px;line-height:13.2px;color:#1f88d8;font-weight:normal;font-family:'Liberation Sans';left:696.20px;">'Upuść pliki tutaj'</div></div><div class="a" style="left:1195.00px;top:204.00px;width:388.00px;height:470.00px;background:#fff;border:1px solid #dee2e6;border-radius:4px;box-sizing:border-box"></div><div class="a" style="left:1196.00px;top:205.00px;width:386.00px;height:54.00px;background:#f5f6f8;border-bottom:1px solid #dee2e6;border-radius:3px 3px 0 0;box-sizing:border-box"></div><div class="a t" style="top:218.36px;font-size:22.85px;line-height:22.85px;color:#222;font-weight:normal;font-family:'Liberation Sans';left:1213.00px;">Właściwości pola</div><div class="a t" style="top:278.66px;font-size:12.8px;line-height:12.8px;color:#222;font-weight:bold;font-family:'Liberation Sans';left:1204.40px;">Ustawienia dla różnych <span style="font-family:'Liberation Mono';font-weight:normal;font-size:12px;letter-spacing:-0.95px;color:#e83e8c;text-decoration:underline;background:#f3f4f6">typów</span> ekranów</div><div class="a" style="left:1308.00px;top:314.00px;width:1.00px;height:7.50px;background:#999"></div><div class="a" style="left:1308.00px;top:330.00px;width:1.00px;height:7.50px;background:#999"></div><div class="a t" style="top:342.89px;font-size:11px;line-height:11px;color:#333;font-weight:normal;font-family:'Liberation Sans';left:1008.50px;width:600px;text-align:center;">0</div><div class="a" style="left:1328.00px;top:314.00px;width:1.00px;height:7.50px;background:#999"></div><div class="a" style="left:1328.00px;top:330.00px;width:1.00px;height:7.50px;background:#999"></div><div class="a t" style="top:342.89px;font-size:11px;line-height:11px;color:#333;font-weight:normal;font-family:'Liberation Sans';left:1028.50px;width:600px;text-align:center;">1</div><div class="a" style="left:1348.00px;top:314.00px;width:1.00px;height:7.50px;background:#999"></div><div class="a" style="left:1348.00px;top:330.00px;width:1.00px;height:7.50px;background:#999"></div><div class="a t" style="top:342.89px;font-size:11px;line-height:11px;color:#333;font-weight:normal;font-family:'Liberation Sans';left:1048.50px;width:600px;text-align:center;">2</div><div class="a" style="left:1368.00px;top:314.00px;width:1.00px;height:7.50px;background:#999"></div><div class="a" style="left:1368.00px;top:330.00px;width:1.00px;height:7.50px;background:#999"></div><div class="a t" style="top:342.89px;font-size:11px;line-height:11px;color:#333;font-weight:normal;font-family:'Liberation Sans';left:1068.50px;width:600px;text-align:center;">3</div><div class="a" style="left:1388.00px;top:314.00px;width:1.00px;height:7.50px;background:#999"></div><div class="a" style="left:1388.00px;top:330.00px;width:1.00px;height:7.50px;background:#999"></div><div class="a t" style="top:342.89px;font-size:11px;line-height:11px;color:#333;font-weight:normal;font-family:'Liberation Sans';left:1088.50px;width:600px;text-align:center;">4</div><div class="a" style="left:1408.00px;top:314.00px;width:1.00px;height:7.50px;background:#999"></div><div class="a" style="left:1408.00px;top:330.00px;width:1.00px;height:7.50px;background:#999"></div><div class="a t" style="top:342.89px;font-size:11px;line-height:11px;color:#333;font-weight:normal;font-family:'Liberation Sans';left:1108.50px;width:600px;text-align:center;">5</div><div class="a" style="left:1428.00px;top:314.00px;width:1.00px;height:7.50px;background:#999"></div><div class="a" style="left:1428.00px;top:330.00px;width:1.00px;height:7.50px;background:#999"></div><div class="a t" style="top:342.89px;font-size:11px;line-height:11px;color:#333;font-weight:normal;font-family:'Liberation Sans';left:1128.50px;width:600px;text-align:center;">6</div><div class="a" style="left:1448.00px;top:314.00px;width:1.00px;height:7.50px;background:#999"></div><div class="a" style="left:1448.00px;top:330.00px;width:1.00px;height:7.50px;background:#999"></div><div class="a t" style="top:342.89px;font-size:11px;line-height:11px;color:#333;font-weight:normal;font-family:'Liberation Sans';left:1148.50px;width:600px;text-align:center;">7</div><div class="a" style="left:1468.00px;top:314.00px;width:1.00px;height:7.50px;background:#999"></div><div class="a" style="left:1468.00px;top:330.00px;width:1.00px;height:7.50px;background:#999"></div><div class="a t" style="top:342.89px;font-size:11px;line-height:11px;color:#333;font-weight:normal;font-family:'Liberation Sans';left:1168.50px;width:600px;text-align:center;">8</div><div class="a" style="left:1488.00px;top:314.00px;width:1.00px;height:7.50px;background:#999"></div><div class="a" style="left:1488.00px;top:330.00px;width:1.00px;height:7.50px;background:#999"></div><div class="a t" style="top:342.89px;font-size:11px;line-height:11px;color:#333;font-weight:normal;font-family:'Liberation Sans';left:1188.50px;width:600px;text-align:center;">9</div><div class="a" style="left:1508.00px;top:314.00px;width:1.00px;height:7.50px;background:#999"></div><div class="a" style="left:1508.00px;top:330.00px;width:1.00px;height:7.50px;background:#999"></div><div class="a t" style="top:342.89px;font-size:11px;line-height:11px;color:#333;font-weight:normal;font-family:'Liberation Sans';left:1208.50px;width:600px;text-align:center;">10</div><div class="a" style="left:1528.00px;top:314.00px;width:1.00px;height:7.50px;background:#999"></div><div class="a" style="left:1528.00px;top:330.00px;width:1.00px;height:7.50px;background:#999"></div><div class="a t" style="top:342.89px;font-size:11px;line-height:11px;color:#333;font-weight:normal;font-family:'Liberation Sans';left:1228.50px;width:600px;text-align:center;">11</div><div class="a" style="left:1546.70px;top:314.00px;width:1.00px;height:7.50px;background:#999"></div><div class="a" style="left:1546.70px;top:330.00px;width:1.00px;height:7.50px;background:#999"></div><div class="a t" style="top:342.89px;font-size:11px;line-height:11px;color:#333;font-weight:normal;font-family:'Liberation Sans';left:1247.20px;width:600px;text-align:center;">12</div><div class="a" style="left:1308.00px;top:324.00px;width:240.00px;height:4.00px;background:#e9ecef;border-radius:2px"></div><div class="a" style="left:1308.00px;top:324.00px;width:120.50px;height:4.00px;background:#03502f;border-radius:2px"></div><div class="a" style="left:1420.50px;top:318.00px;width:16.00px;height:16.00px;background:#03502f;border-radius:50%"></div><div class="a t" style="top:320.22px;font-size:12.5px;line-height:12.5px;color:#4a4a4a;font-weight:normal;font-family:'Liberation Sans';left:678.00px;width:600px;text-align:right;">Duży ekran</div><div class="a t" style="top:338.62px;font-size:12.5px;line-height:12.5px;color:#4a4a4a;font-weight:normal;font-family:'Liberation Sans';left:678.00px;width:600px;text-align:right;">(col-lg)</div><div class="a" style="left:1308.00px;top:380.00px;width:1.00px;height:7.50px;background:#999"></div><div class="a" style="left:1308.00px;top:396.00px;width:1.00px;height:7.50px;background:#999"></div><div class="a t" style="top:408.89px;font-size:11px;line-height:11px;color:#333;font-weight:normal;font-family:'Liberation Sans';left:1008.50px;width:600px;text-align:center;">0</div><div class="a" style="left:1328.00px;top:380.00px;width:1.00px;height:7.50px;background:#999"></div><div class="a" style="left:1328.00px;top:396.00px;width:1.00px;height:7.50px;background:#999"></div><div class="a t" style="top:408.89px;font-size:11px;line-height:11px;color:#333;font-weight:normal;font-family:'Liberation Sans';left:1028.50px;width:600px;text-align:center;">1</div><div class="a" style="left:1348.00px;top:380.00px;width:1.00px;height:7.50px;background:#999"></div><div class="a" style="left:1348.00px;top:396.00px;width:1.00px;height:7.50px;background:#999"></div><div class="a t" style="top:408.89px;font-size:11px;line-height:11px;color:#333;font-weight:normal;font-family:'Liberation Sans';left:1048.50px;width:600px;text-align:center;">2</div><div class="a" style="left:1368.00px;top:380.00px;width:1.00px;height:7.50px;background:#999"></div><div class="a" style="left:1368.00px;top:396.00px;width:1.00px;height:7.50px;background:#999"></div><div class="a t" style="top:408.89px;font-size:11px;line-height:11px;color:#333;font-weight:normal;font-family:'Liberation Sans';left:1068.50px;width:600px;text-align:center;">3</div><div class="a" style="left:1388.00px;top:380.00px;width:1.00px;height:7.50px;background:#999"></div><div class="a" style="left:1388.00px;top:396.00px;width:1.00px;height:7.50px;background:#999"></div><div class="a t" style="top:408.89px;font-size:11px;line-height:11px;color:#333;font-weight:normal;font-family:'Liberation Sans';left:1088.50px;width:600px;text-align:center;">4</div><div class="a" style="left:1408.00px;top:380.00px;width:1.00px;height:7.50px;background:#999"></div><div class="a" style="left:1408.00px;top:396.00px;width:1.00px;height:7.50px;background:#999"></div><div class="a t" style="top:408.89px;font-size:11px;line-height:11px;color:#333;font-weight:normal;font-family:'Liberation Sans';left:1108.50px;width:600px;text-align:center;">5</div><div class="a" style="left:1428.00px;top:380.00px;width:1.00px;height:7.50px;background:#999"></div><div class="a" style="left:1428.00px;top:396.00px;width:1.00px;height:7.50px;background:#999"></div><div class="a t" style="top:408.89px;font-size:11px;line-height:11px;color:#333;font-weight:normal;font-family:'Liberation Sans';left:1128.50px;width:600px;text-align:center;">6</div><div class="a" style="left:1448.00px;top:380.00px;width:1.00px;height:7.50px;background:#999"></div><div class="a" style="left:1448.00px;top:396.00px;width:1.00px;height:7.50px;background:#999"></div><div class="a t" style="top:408.89px;font-size:11px;line-height:11px;color:#333;font-weight:normal;font-family:'Liberation Sans';left:1148.50px;width:600px;text-align:center;">7</div><div class="a" style="left:1468.00px;top:380.00px;width:1.00px;height:7.50px;background:#999"></div><div class="a" style="left:1468.00px;top:396.00px;width:1.00px;height:7.50px;background:#999"></div><div class="a t" style="top:408.89px;font-size:11px;line-height:11px;color:#333;font-weight:normal;font-family:'Liberation Sans';left:1168.50px;width:600px;text-align:center;">8</div><div class="a" style="left:1488.00px;top:380.00px;width:1.00px;height:7.50px;background:#999"></div><div class="a" style="left:1488.00px;top:396.00px;width:1.00px;height:7.50px;background:#999"></div><div class="a t" style="top:408.89px;font-size:11px;line-height:11px;color:#333;font-weight:normal;font-family:'Liberation Sans';left:1188.50px;width:600px;text-align:center;">9</div><div class="a" style="left:1508.00px;top:380.00px;width:1.00px;height:7.50px;background:#999"></div><div class="a" style="left:1508.00px;top:396.00px;width:1.00px;height:7.50px;background:#999"></div><div class="a t" style="top:408.89px;font-size:11px;line-height:11px;color:#333;font-weight:normal;font-family:'Liberation Sans';left:1208.50px;width:600px;text-align:center;">10</div><div class="a" style="left:1528.00px;top:380.00px;width:1.00px;height:7.50px;background:#999"></div><div class="a" style="left:1528.00px;top:396.00px;width:1.00px;height:7.50px;background:#999"></div><div class="a t" style="top:408.89px;font-size:11px;line-height:11px;color:#333;font-weight:normal;font-family:'Liberation Sans';left:1228.50px;width:600px;text-align:center;">11</div><div class="a" style="left:1546.70px;top:380.00px;width:1.00px;height:7.50px;background:#999"></div><div class="a" style="left:1546.70px;top:396.00px;width:1.00px;height:7.50px;background:#999"></div><div class="a t" style="top:408.89px;font-size:11px;line-height:11px;color:#333;font-weight:normal;font-family:'Liberation Sans';left:1247.20px;width:600px;text-align:center;">12</div><div class="a" style="left:1308.00px;top:390.00px;width:240.00px;height:4.00px;background:#e9ecef;border-radius:2px"></div><div class="a" style="left:1300.50px;top:384.00px;width:16.00px;height:16.00px;background:#03502f;border-radius:50%"></div><div class="a t" style="top:386.02px;font-size:12.5px;line-height:12.5px;color:#4a4a4a;font-weight:normal;font-family:'Liberation Sans';left:678.00px;width:600px;text-align:right;">Średni</div><div class="a t" style="top:405.62px;font-size:12.5px;line-height:12.5px;color:#4a4a4a;font-weight:normal;font-family:'Liberation Sans';left:678.00px;width:600px;text-align:right;">ekran (col-</div><div class="a t" style="top:423.82px;font-size:12.5px;line-height:12.5px;color:#4a4a4a;font-weight:normal;font-family:'Liberation Sans';left:678.00px;width:600px;text-align:right;">md)</div><div class="a" style="left:1308.00px;top:465.00px;width:1.00px;height:7.50px;background:#999"></div><div class="a" style="left:1308.00px;top:481.00px;width:1.00px;height:7.50px;background:#999"></div><div class="a t" style="top:493.89px;font-size:11px;line-height:11px;color:#333;font-weight:normal;font-family:'Liberation Sans';left:1008.50px;width:600px;text-align:center;">0</div><div class="a" style="left:1328.00px;top:465.00px;width:1.00px;height:7.50px;background:#999"></div><div class="a" style="left:1328.00px;top:481.00px;width:1.00px;height:7.50px;background:#999"></div><div class="a t" style="top:493.89px;font-size:11px;line-height:11px;color:#333;font-weight:normal;font-family:'Liberation Sans';left:1028.50px;width:600px;text-align:center;">1</div><div class="a" style="left:1348.00px;top:465.00px;width:1.00px;height:7.50px;background:#999"></div><div class="a" style="left:1348.00px;top:481.00px;width:1.00px;height:7.50px;background:#999"></div><div class="a t" style="top:493.89px;font-size:11px;line-height:11px;color:#333;font-weight:normal;font-family:'Liberation Sans';left:1048.50px;width:600px;text-align:center;">2</div><div class="a" style="left:1368.00px;top:465.00px;width:1.00px;height:7.50px;background:#999"></div><div class="a" style="left:1368.00px;top:481.00px;width:1.00px;height:7.50px;background:#999"></div><div class="a t" style="top:493.89px;font-size:11px;line-height:11px;color:#333;font-weight:normal;font-family:'Liberation Sans';left:1068.50px;width:600px;text-align:center;">3</div><div class="a" style="left:1388.00px;top:465.00px;width:1.00px;height:7.50px;background:#999"></div><div class="a" style="left:1388.00px;top:481.00px;width:1.00px;height:7.50px;background:#999"></div><div class="a t" style="top:493.89px;font-size:11px;line-height:11px;color:#333;font-weight:normal;font-family:'Liberation Sans';left:1088.50px;width:600px;text-align:center;">4</div><div class="a" style="left:1408.00px;top:465.00px;width:1.00px;height:7.50px;background:#999"></div><div class="a" style="left:1408.00px;top:481.00px;width:1.00px;height:7.50px;background:#999"></div><div class="a t" style="top:493.89px;font-size:11px;line-height:11px;color:#333;font-weight:normal;font-family:'Liberation Sans';left:1108.50px;width:600px;text-align:center;">5</div><div class="a" style="left:1428.00px;top:465.00px;width:1.00px;height:7.50px;background:#999"></div><div class="a" style="left:1428.00px;top:481.00px;width:1.00px;height:7.50px;background:#999"></div><div class="a t" style="top:493.89px;font-size:11px;line-height:11px;color:#333;font-weight:normal;font-family:'Liberation Sans';left:1128.50px;width:600px;text-align:center;">6</div><div class="a" style="left:1448.00px;top:465.00px;width:1.00px;height:7.50px;background:#999"></div><div class="a" style="left:1448.00px;top:481.00px;width:1.00px;height:7.50px;background:#999"></div><div class="a t" style="top:493.89px;font-size:11px;line-height:11px;color:#333;font-weight:normal;font-family:'Liberation Sans';left:1148.50px;width:600px;text-align:center;">7</div><div class="a" style="left:1468.00px;top:465.00px;width:1.00px;height:7.50px;background:#999"></div><div class="a" style="left:1468.00px;top:481.00px;width:1.00px;height:7.50px;background:#999"></div><div class="a t" style="top:493.89px;font-size:11px;line-height:11px;color:#333;font-weight:normal;font-family:'Liberation Sans';left:1168.50px;width:600px;text-align:center;">8</div><div class="a" style="left:1488.00px;top:465.00px;width:1.00px;height:7.50px;background:#999"></div><div class="a" style="left:1488.00px;top:481.00px;width:1.00px;height:7.50px;background:#999"></div><div class="a t" style="top:493.89px;font-size:11px;line-height:11px;color:#333;font-weight:normal;font-family:'Liberation Sans';left:1188.50px;width:600px;text-align:center;">9</div><div class="a" style="left:1508.00px;top:465.00px;width:1.00px;height:7.50px;background:#999"></div><div class="a" style="left:1508.00px;top:481.00px;width:1.00px;height:7.50px;background:#999"></div><div class="a t" style="top:493.89px;font-size:11px;line-height:11px;color:#333;font-weight:normal;font-family:'Liberation Sans';left:1208.50px;width:600px;text-align:center;">10</div><div class="a" style="left:1528.00px;top:465.00px;width:1.00px;height:7.50px;background:#999"></div><div class="a" style="left:1528.00px;top:481.00px;width:1.00px;height:7.50px;background:#999"></div><div class="a t" style="top:493.89px;font-size:11px;line-height:11px;color:#333;font-weight:normal;font-family:'Liberation Sans';left:1228.50px;width:600px;text-align:center;">11</div><div class="a" style="left:1546.70px;top:465.00px;width:1.00px;height:7.50px;background:#999"></div><div class="a" style="left:1546.70px;top:481.00px;width:1.00px;height:7.50px;background:#999"></div><div class="a t" style="top:493.89px;font-size:11px;line-height:11px;color:#333;font-weight:normal;font-family:'Liberation Sans';left:1247.20px;width:600px;text-align:center;">12</div><div class="a" style="left:1308.00px;top:475.00px;width:240.00px;height:4.00px;background:#e9ecef;border-radius:2px"></div><div class="a" style="left:1300.50px;top:469.00px;width:16.00px;height:16.00px;background:#03502f;border-radius:50%"></div><div class="a t" style="top:471.82px;font-size:12.5px;line-height:12.5px;color:#4a4a4a;font-weight:normal;font-family:'Liberation Sans';left:678.00px;width:600px;text-align:right;">Mały ekran</div><div class="a t" style="top:490.42px;font-size:12.5px;line-height:12.5px;color:#4a4a4a;font-weight:normal;font-family:'Liberation Sans';left:678.00px;width:600px;text-align:right;">(col-sm)</div><div class="a" style="left:1308.00px;top:531.00px;width:1.00px;height:7.50px;background:#999"></div><div class="a" style="left:1308.00px;top:547.00px;width:1.00px;height:7.50px;background:#999"></div><div class="a t" style="top:559.89px;font-size:11px;line-height:11px;color:#333;font-weight:normal;font-family:'Liberation Sans';left:1008.50px;width:600px;text-align:center;">0</div><div class="a" style="left:1328.00px;top:531.00px;width:1.00px;height:7.50px;background:#999"></div><div class="a" style="left:1328.00px;top:547.00px;width:1.00px;height:7.50px;background:#999"></div><div class="a t" style="top:559.89px;font-size:11px;line-height:11px;color:#333;font-weight:normal;font-family:'Liberation Sans';left:1028.50px;width:600px;text-align:center;">1</div><div class="a" style="left:1348.00px;top:531.00px;width:1.00px;height:7.50px;background:#999"></div><div class="a" style="left:1348.00px;top:547.00px;width:1.00px;height:7.50px;background:#999"></div><div class="a t" style="top:559.89px;font-size:11px;line-height:11px;color:#333;font-weight:normal;font-family:'Liberation Sans';left:1048.50px;width:600px;text-align:center;">2</div><div class="a" style="left:1368.00px;top:531.00px;width:1.00px;height:7.50px;background:#999"></div><div class="a" style="left:1368.00px;top:547.00px;width:1.00px;height:7.50px;background:#999"></div><div class="a t" style="top:559.89px;font-size:11px;line-height:11px;color:#333;font-weight:normal;font-family:'Liberation Sans';left:1068.50px;width:600px;text-align:center;">3</div><div class="a" style="left:1388.00px;top:531.00px;width:1.00px;height:7.50px;background:#999"></div><div class="a" style="left:1388.00px;top:547.00px;width:1.00px;height:7.50px;background:#999"></div><div class="a t" style="top:559.89px;font-size:11px;line-height:11px;color:#333;font-weight:normal;font-family:'Liberation Sans';left:1088.50px;width:600px;text-align:center;">4</div><div class="a" style="left:1408.00px;top:531.00px;width:1.00px;height:7.50px;background:#999"></div><div class="a" style="left:1408.00px;top:547.00px;width:1.00px;height:7.50px;background:#999"></div><div class="a t" style="top:559.89px;font-size:11px;line-height:11px;color:#333;font-weight:normal;font-family:'Liberation Sans';left:1108.50px;width:600px;text-align:center;">5</div><div class="a" style="left:1428.00px;top:531.00px;width:1.00px;height:7.50px;background:#999"></div><div class="a" style="left:1428.00px;top:547.00px;width:1.00px;height:7.50px;background:#999"></div><div class="a t" style="top:559.89px;font-size:11px;line-height:11px;color:#333;font-weight:normal;font-family:'Liberation Sans';left:1128.50px;width:600px;text-align:center;">6</div><div class="a" style="left:1448.00px;top:531.00px;width:1.00px;height:7.50px;background:#999"></div><div class="a" style="left:1448.00px;top:547.00px;width:1.00px;height:7.50px;background:#999"></div><div class="a t" style="top:559.89px;font-size:11px;line-height:11px;color:#333;font-weight:normal;font-family:'Liberation Sans';left:1148.50px;width:600px;text-align:center;">7</div><div class="a" style="left:1468.00px;top:531.00px;width:1.00px;height:7.50px;background:#999"></div><div class="a" style="left:1468.00px;top:547.00px;width:1.00px;height:7.50px;background:#999"></div><div class="a t" style="top:559.89px;font-size:11px;line-height:11px;color:#333;font-weight:normal;font-family:'Liberation Sans';left:1168.50px;width:600px;text-align:center;">8</div><div class="a" style="left:1488.00px;top:531.00px;width:1.00px;height:7.50px;background:#999"></div><div class="a" style="left:1488.00px;top:547.00px;width:1.00px;height:7.50px;background:#999"></div><div class="a t" style="top:559.89px;font-size:11px;line-height:11px;color:#333;font-weight:normal;font-family:'Liberation Sans';left:1188.50px;width:600px;text-align:center;">9</div><div class="a" style="left:1508.00px;top:531.00px;width:1.00px;height:7.50px;background:#999"></div><div class="a" style="left:1508.00px;top:547.00px;width:1.00px;height:7.50px;background:#999"></div><div class="a t" style="top:559.89px;font-size:11px;line-height:11px;color:#333;font-weight:normal;font-family:'Liberation Sans';left:1208.50px;width:600px;text-align:center;">10</div><div class="a" style="left:1528.00px;top:531.00px;width:1.00px;height:7.50px;background:#999"></div><div class="a" style="left:1528.00px;top:547.00px;width:1.00px;height:7.50px;background:#999"></div><div class="a t" style="top:559.89px;font-size:11px;line-height:11px;color:#333;font-weight:normal;font-family:'Liberation Sans';left:1228.50px;width:600px;text-align:center;">11</div><div class="a" style="left:1546.70px;top:531.00px;width:1.00px;height:7.50px;background:#999"></div><div class="a" style="left:1546.70px;top:547.00px;width:1.00px;height:7.50px;background:#999"></div><div class="a t" style="top:559.89px;font-size:11px;line-height:11px;color:#333;font-weight:normal;font-family:'Liberation Sans';left:1247.20px;width:600px;text-align:center;">12</div><div class="a" style="left:1308.00px;top:541.00px;width:240.00px;height:4.00px;background:#e9ecef;border-radius:2px"></div><div class="a" style="left:1300.50px;top:535.00px;width:16.00px;height:16.00px;background:#03502f;border-radius:50%"></div><div class="a t" style="top:537.72px;font-size:12.5px;line-height:12.5px;color:#4a4a4a;font-weight:normal;font-family:'Liberation Sans';left:678.00px;width:600px;text-align:right;">Bardzo</div><div class="a t" style="top:556.42px;font-size:12.5px;line-height:12.5px;color:#4a4a4a;font-weight:normal;font-family:'Liberation Sans';left:678.00px;width:600px;text-align:right;">mały ekran</div><div class="a t" style="top:575.22px;font-size:12.5px;line-height:12.5px;color:#4a4a4a;font-weight:normal;font-family:'Liberation Sans';left:678.00px;width:600px;text-align:right;">(col-xs)</div><div class="a" style="left:1197.00px;top:632.00px;width:56.00px;height:26.00px;background:#03502f;border-radius:3px"></div><svg class="a" style="left:1204.00px;top:639.00px" width="12" height="12" viewBox="0 0 12 12"><circle cx="6" cy="6" r="5.8" fill="#fff"/><path d="M9 6H3.6M6 3.3L3.3 6L6 8.7" stroke="#03502f" stroke-width="1.7" fill="none"/></svg><div class="a t" style="top:639.77px;font-size:11.5px;line-height:11.5px;color:#fff;font-weight:bold;font-family:'Liberation Sans';left:1218.00px;">Wróć</div><div class="a" style="left:0.00px;top:0.00px;width:1586.00px;height:1.00px;background:#3a3a3a"></div><div class="a" style="left:0.00px;top:0.00px;width:1.00px;height:893.00px;background:#5a5a5a"></div><div class="a" style="left:1.00px;top:80.00px;width:2.00px;height:810.00px;background:#e5e8ee"></div><div class="a" style="left:1584.00px;top:0.00px;width:2.00px;height:80.00px;background:#3a3a3a"></div><div class="a" style="left:1585.00px;top:80.00px;width:1.00px;height:813.00px;background:#3a3a3a"></div><div class="a" style="left:1583.00px;top:80.00px;width:2.00px;height:810.00px;background:#e5e8ee"></div><div class="a" style="left:0.00px;top:890.00px;width:1586.00px;height:1.00px;background:#e1e4ea"></div><div class="a" style="left:0.00px;top:891.00px;width:1586.00px;height:1.00px;background:#8d8f93"></div><div class="a" style="left:0.00px;top:892.00px;width:1586.00px;height:1.00px;background:#2a2a2a"></div>
</body></html>
